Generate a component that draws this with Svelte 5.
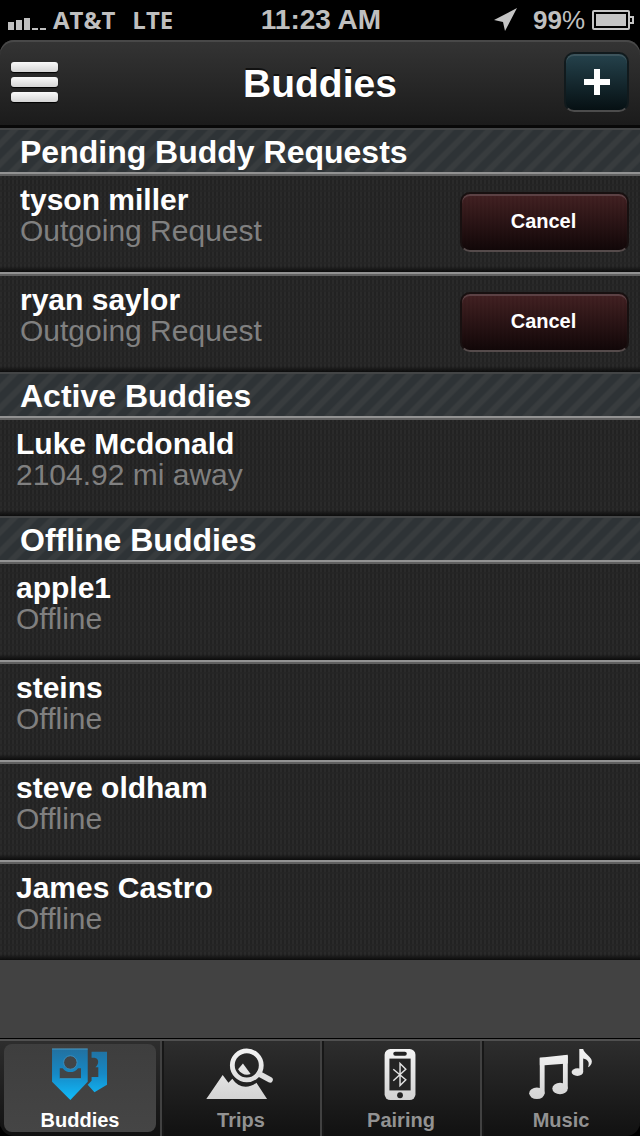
<script>
  let activeTab = "Buddies";

  const tabs = ["Buddies", "Trips", "Pairing", "Music"];

  let sections = [
    {
      title: "Pending Buddy Requests",
      pending: true,
      buddies: [
        { name: "tyson miller", status: "Outgoing Request" },
        { name: "ryan saylor", status: "Outgoing Request" },
      ],
    },
    {
      title: "Active Buddies",
      buddies: [{ name: "Luke Mcdonald", status: "2104.92 mi away" }],
    },
    {
      title: "Offline Buddies",
      buddies: [
        { name: "apple1", status: "Offline" },
        { name: "steins", status: "Offline" },
        { name: "steve oldham", status: "Offline" },
        { name: "James Castro", status: "Offline" },
      ],
    },
  ];

  function cancelRequest(buddy) {
    sections = sections.map((section) =>
      section.pending
        ? { ...section, buddies: section.buddies.filter((b) => b !== buddy) }
        : section
    );
  }
</script>

<div class="app">
  <div class="status-bar">
    <div class="carrier">
      <svg width="38" height="20" viewBox="0 0 38 20" fill="#bfbfbf" aria-hidden="true">
        <path d="M0 12h6v8H0zM8 10h6v10H8zM16 8h6v12h-6zM24 18h6v2h-6zM32 18h6v2h-6z" />
      </svg>
      <span>AT&amp;T</span>
      <span class="network">LTE</span>
    </div>
    <div class="time">11:23 AM</div>
    <div class="power">
      <svg width="24" height="24" viewBox="0 0 24 24" fill="#c4c4c4" aria-hidden="true">
        <path d="M23 0 11 23 9 14 0 12z" />
      </svg>
      <span class="percent">99<span class="sign">%</span></span>
      <svg width="42" height="20" viewBox="0 0 42 20" aria-hidden="true">
        <rect x="1" y="1" width="36" height="18" rx="1" fill="none" stroke="#c4c4c4" stroke-width="2" />
        <path d="M4 4h30v12H4z" fill="#c4c4c4" />
        <path d="M38 7h3v6h-3" fill="none" stroke="#c4c4c4" stroke-width="2" />
      </svg>
    </div>
  </div>

  <header>
    <button class="menu" aria-label="Menu">
      <span></span>
      <span></span>
      <span></span>
    </button>
    <h1>Buddies</h1>
    <button class="add" aria-label="Add buddy">
      <svg width="26" height="26" viewBox="0 0 26 26" fill="#fff" aria-hidden="true">
        <path d="M10 0h6v10h10v6H16v10h-6V16H0v-6h10z" />
      </svg>
    </button>
  </header>

  <main>
    {#each sections as section}
      <section>
        <h2>{section.title}</h2>
        <ul>
          {#each section.buddies as buddy}
            <li class:pending={section.pending}>
              <div class="info">
                <div class="name">{buddy.name}</div>
                <div class="status">{buddy.status}</div>
              </div>
              {#if section.pending}
                <button class="cancel" on:click={() => cancelRequest(buddy)}>Cancel</button>
              {/if}
            </li>
          {/each}
        </ul>
      </section>
    {/each}
  </main>

  <svg class="defs" width="0" height="0" aria-hidden="true">
    <defs>
      <linearGradient id="blue" x1="0" y1="0" x2="0" y2="54" gradientUnits="userSpaceOnUse">
        <stop offset="0" stop-color="#23709f" />
        <stop offset="0.5" stop-color="#1689c6" />
        <stop offset="1" stop-color="#10bdfc" />
      </linearGradient>
      <linearGradient id="silver" x1="0" y1="0" x2="0" y2="54" gradientUnits="userSpaceOnUse">
        <stop offset="0" stop-color="#f4f4f4" />
        <stop offset="1" stop-color="#d2d2d2" />
      </linearGradient>
    </defs>
  </svg>

  <nav>
    {#each tabs as tab}
      <button class="tab" class:active={tab === activeTab} on:click={() => (activeTab = tab)}>
        <span class="face">
          <svg width="84" height="56" viewBox="0 0 84 56" aria-hidden="true">
            {#if tab === "Buddies"}
              <path d="M13 1h37v34L32 54 13 35z" fill="url(#blue)" />
              <path d="M13 1h37" stroke="#4b9cc9" />
              <path d="M21 21h3c2 3 5 4 8 4s6-1 8-4h3v11H21z" fill="#424547" />
              <circle cx="32" cy="15" r="7" fill="#424547" stroke="#3a8fbf" />
              <path d="M21 32h22" stroke="#2fa6dd" />
              <path d="M54 4h16v34L57 46l-7-8 4-4v-4h7V20h-3c4-4 4-9-1-10h-3z" fill="url(#blue)" />
            {:else if tab === "Trips"}
              <path d="M6 53 23 28l6 8 4-4c6 9 16 11 25 4l11 17z" fill="url(#silver)" />
              <circle cx="48" cy="18" r="15" fill="none" stroke="url(#silver)" stroke-width="5" />
              <path d="m61 27 11 6" stroke="#dedede" stroke-width="6" stroke-linecap="round" />
              <path d="M44 16 52 27c-5 2-10 0-13-5z" fill="url(#silver)" />
            {:else if tab === "Pairing"}
              <rect x="25" y="1" width="32" height="53" rx="6" fill="url(#silver)" />
              <rect x="34" y="4" width="14" height="4" rx="2" fill="#222" />
              <path d="M30 11h22v33H30z" fill="#242424" />
              <circle cx="41" cy="49" r="3" fill="#222" />
              <path d="m34 22 13 11-6 6V16l6 6-13 12" fill="none" stroke="#e2e2e2" stroke-width="1.5" />
            {:else}
              <g fill="url(#silver)">
                <path d="M20 10 49 7v9l-24 2h-5z" />
                <path d="M20 10h5v37h-5zM44 8h5v34h-5z" />
                <ellipse cx="17" cy="47" rx="8" ry="6" />
                <ellipse cx="41" cy="42" rx="8" ry="6" />
                <path d="M61 1h4c1 5 9 8 9 13 0 3-2 5-4 6 2-5 0-8-5-9v14h-4z" />
                <ellipse cx="59" cy="25" rx="6" ry="4" />
              </g>
            {/if}
          </svg>
          {tab}
        </span>
      </button>
    {/each}
  </nav>
</div>

<style>
  :global(body) {
    background: #000;
  }
  .app {
    display: flex;
    flex-direction: column;
    min-height: 100vh;
    background: #000;
    color: #fff;
    font-family: "Liberation Sans", Arial, sans-serif;
  }
  button {
    margin: 0;
    padding: 0;
    border: 0;
    background: none;
    color: inherit;
    font-family: inherit;
    cursor: pointer;
  }
  h1, h2, ul {
    margin: 0;
    padding: 0;
  }
  svg {
    display: block;
  }
  .defs {
    position: absolute;
  }

  .status-bar {
    display: grid;
    grid-template-columns: 1fr auto 1fr;
    align-items: center;
    height: 40px;
    padding: 0 6px 0 8px;
    color: #bfbfbf;
    font-size: 26px;
    font-weight: bold;
  }
  .carrier, .power {
    display: flex;
    align-items: center;
    gap: 7px;
  }
  .carrier {
    font-family: "Open Sans", sans-serif;
    font-size: 24px;
    line-height: 36px;
  }
  .network {
    margin-left: 10px;
  }
  .time {
    font-size: 28px;
  }
  .power {
    justify-content: flex-end;
  }
  .percent {
    margin-left: 8px;
  }
  .sign {
    font-weight: normal;
  }

  header {
    display: grid;
    grid-template-columns: 1fr auto 1fr;
    align-items: center;
    box-sizing: border-box;
    height: 88px;
    padding: 0 11px 2px;
    border-bottom: 3px solid #080808;
    border-radius: 14px 14px 0 0;
    background: linear-gradient(#343434, #1b1b1b);
    box-shadow: inset 0 2px 0 #484848;
  }
  h1 {
    padding-top: 4px;
    font-size: 39px;
    line-height: 48px;
    text-shadow: 0 -2px 0 #111;
  }
  .menu {
    display: flex;
    flex-direction: column;
    gap: 5px;
    width: 47px;
  }
  .menu span {
    height: 10px;
    border-radius: 3px;
    background: linear-gradient(#fafafa, #d4d4d4);
    box-shadow: 0 1px 1px #000;
  }
  .add {
    display: grid;
    place-items: center;
    justify-self: end;
    width: 65px;
    height: 60px;
    border: 2px solid #111a1d;
    border-bottom-color: #4c4c4c;
    border-radius: 10px;
    background: linear-gradient(#25424c, #061013);
    box-shadow: inset 0 2px 0 #3d545c;
  }

  main {
    flex: 1;
    background: #424242;
  }
  h2 {
    box-sizing: border-box;
    height: 44px;
    padding: 0 20px;
    border-top: 2px solid #434546;
    background: repeating-linear-gradient(135deg, #2e3336 0 6px, #383c3e 8px 12px, #2e3336 14px);
    font-size: 32px;
    line-height: 44px;
  }
  ul {
    list-style: none;
  }
  li {
    display: flex;
    justify-content: space-between;
    box-sizing: border-box;
    height: 100px;
    padding: 10px 11px 0 16px;
    border-top: 2px solid #929292;
    background:
      linear-gradient(transparent 92px, #0c0c0c),
      linear-gradient(#606060 2px, transparent 2px),
      repeating-linear-gradient(transparent 0 4px, #252525cc 4px 6px),
      repeating-linear-gradient(90deg, #2a2a2a 0 2px, #222 2px 4px);
  }
  .pending {
    padding-left: 20px;
  }
  .name, .status {
    font-size: 30px;
    line-height: 31px;
  }
  .name {
    font-weight: bold;
  }
  .status {
    color: #808080;
  }
  .cancel {
    width: 169px;
    height: 60px;
    margin-top: 8px;
    padding: 0 2px 2px 0;
    border: 2px solid #181010;
    border-bottom-color: #554b4b;
    border-radius: 10px;
    background:
      linear-gradient(#4a2022cc, #100506ee),
      repeating-linear-gradient(90deg, #2b2b2b 0 2px, #1e1e1e 2px 4px);
    box-shadow: inset 0 2px 0 #5b4144;
    font-size: 20px;
    font-weight: bold;
  }

  nav {
    display: grid;
    grid-template-columns: repeat(4, 1fr);
    height: 95px;
    padding-top: 2px;
    border-top: 1px solid #000;
    border-radius: 0 0 14px 14px;
    background: linear-gradient(#2e2e2e, #111);
    box-shadow: inset 0 2px 0 #505050;
  }
  .tab {
    display: flex;
    padding: 3px 4px 4px;
    border-left: 2px solid #414141;
    box-shadow: inset 2px 0 0 #171717;
    color: #929292;
    font-size: 20px;
    font-weight: bold;
    line-height: 24px;
  }
  .tab:first-child {
    border-left: 0;
    box-shadow: none;
  }
  .face {
    display: flex;
    flex: 1;
    flex-direction: column;
    align-items: center;
    gap: 6px;
    height: 84px;
    padding-top: 4px;
    border-radius: 8px;
  }
  .active .face {
    background: linear-gradient(#3e3e3e, #454545);
    color: #fff;
  }
</style>
